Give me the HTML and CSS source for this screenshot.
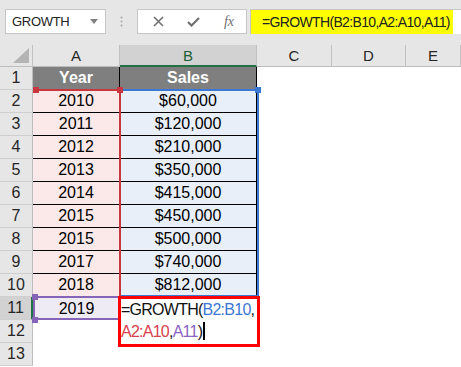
FILE: index.html
```html
<!DOCTYPE html>
<html lang="en">
<head>
  <meta charset="UTF-8">
  <title>GROWTH formula</title>
  <link rel="stylesheet" href="styles.css">
</head>
<body>
  <div class="toolbar">
    <div class="namebox">
      <span>GROWTH</span>
      <svg class="caret" width="8" height="5" viewBox="0 0 8 5"><path d="M0 0h8L4 5z" fill="#808080"/></svg>
    </div>
    <div class="sep">
      <svg width="3" height="11" viewBox="0 0 3 11"><circle cx="1.5" cy="1.5" r="1" fill="#a8a8a8"/><circle cx="1.5" cy="5.5" r="1" fill="#a8a8a8"/><circle cx="1.5" cy="9.5" r="1" fill="#a8a8a8"/></svg>
    </div>
    <div class="fxbox">
      <svg width="11" height="11" viewBox="0 0 11 11"><path d="M1 1l9 9M10 1l-9 9" stroke="#707070" stroke-width="1.6"/></svg>
      <svg width="13" height="10" viewBox="0 0 13 10"><path d="M1 5l3.5 3.5L12 1" stroke="#707070" stroke-width="2.2" fill="none"/></svg>
      <span class="fx">fx</span>
    </div>
    <div class="formula">
      <span class="hl">=GROWTH(B2:B10,A2:A10,A11)</span>
    </div>
  </div>

  <div class="sheet">
    <div class="hd corner"><svg width="16" height="15" viewBox="0 0 16 15"><path d="M16 0v15H0z" fill="#b4b4b4"/></svg></div>
    <div class="hd">A</div>
    <div class="hd sel">B</div>
    <div class="hd">C</div>
    <div class="hd">D</div>
    <div class="hd">E</div>

    <div class="rn">1</div><div class="c t top">Year</div><div class="c t top">Sales</div><div class="c"></div><div class="c"></div><div class="c"></div>
    <div class="rn">2</div><div class="c t a">2010</div><div class="c t b">$60,000</div><div class="c"></div><div class="c"></div><div class="c"></div>
    <div class="rn">3</div><div class="c t a">2011</div><div class="c t b">$120,000</div><div class="c"></div><div class="c"></div><div class="c"></div>
    <div class="rn">4</div><div class="c t a">2012</div><div class="c t b">$210,000</div><div class="c"></div><div class="c"></div><div class="c"></div>
    <div class="rn">5</div><div class="c t a">2013</div><div class="c t b">$350,000</div><div class="c"></div><div class="c"></div><div class="c"></div>
    <div class="rn">6</div><div class="c t a">2014</div><div class="c t b">$415,000</div><div class="c"></div><div class="c"></div><div class="c"></div>
    <div class="rn">7</div><div class="c t a">2015</div><div class="c t b">$450,000</div><div class="c"></div><div class="c"></div><div class="c"></div>
    <div class="rn">8</div><div class="c t a">2015</div><div class="c t b">$500,000</div><div class="c"></div><div class="c"></div><div class="c"></div>
    <div class="rn">9</div><div class="c t a">2017</div><div class="c t b">$740,000</div><div class="c"></div><div class="c"></div><div class="c"></div>
    <div class="rn">10</div><div class="c t a">2018</div><div class="c t b">$812,000</div><div class="c"></div><div class="c"></div><div class="c"></div>
    <div class="rn sel">11</div><div class="c p">2019</div><div class="c"></div><div class="c"></div><div class="c"></div><div class="c"></div>
    <div class="rn">12</div><div class="c"></div><div class="c"></div><div class="c"></div><div class="c"></div><div class="c"></div>
    <div class="rn">13</div><div class="c"></div><div class="c"></div><div class="c"></div><div class="c"></div><div class="c"></div>

    <!-- range highlights drawn over the grid -->
    <div class="range blue-range"></div>
    <div class="range red-range"></div>
    <div class="range purple-range"></div>
    <span class="handle red h1"></span>
    <span class="handle red h2"></span>
    <span class="handle blue h3"></span>
    <span class="handle purple h4"></span>
    <span class="handle purple h5"></span>

    <div class="edit">
      =GROWTH(<span class="rb">B2:B10</span>,<br><span class="rr">A2:A10</span>,<span class="rp">A11</span>)<span class="cursor"></span>
    </div>
  </div>
</body>
</html>
```

FILE: styles.css
```css
* {
  margin: 0;
  padding: 0;
  box-sizing: border-box;
}

body {
  font-family: 'Liberation Sans', Arial, sans-serif;
  background: #fff;
  color: #000;
  width: 461px;
  overflow: hidden;
}

/* formula bar */
.toolbar {
  height: 45px;
  background: #e6e6e6;
  display: flex;
  align-items: flex-start;
  padding: 9px 0 0 5px;
}

.namebox {
  width: 101px;
  height: 25px;
  background: #fff;
  border: 1px solid #c6c6c6;
  display: flex;
  align-items: center;
  justify-content: space-between;
  padding: 0 7px 0 6px;
  font-size: 13px;
  letter-spacing: -0.3px;
  color: #222;
}

.sep {
  width: 31px;
  height: 25px;
  display: flex;
  align-items: center;
  justify-content: center;
}

.fxbox {
  width: 110px;
  height: 25px;
  background: #fff;
  border: 1px solid #c6c6c6;
  display: flex;
  align-items: center;
  justify-content: space-between;
  padding: 0 12px 0 15px;
}

.fx {
  font-family: 'Liberation Serif', serif;
  font-style: italic;
  font-size: 14px;
  color: #707070;
}

.formula {
  flex: 1;
  height: 25px;
  margin-left: 3px;
  background: #fff;
  border-top: 1px solid #c6c6c6;
  border-left: 1px solid #c6c6c6;
  display: flex;
}

.hl {
  width: 202px;
  height: 24px;
  background: #ffff00;
  font-size: 14px;
  letter-spacing: -0.65px;
  line-height: 24px;
  padding-left: 11px;
  color: #222;
}

/* grid */
.sheet {
  position: relative;
  display: grid;
  grid-template-columns: 33px 87px 137px 75px 74px 1fr;
  grid-template-rows: 22px repeat(13, 23px);
  font-size: 16px;
}

.hd {
  background: #e6e6e6;
  border-right: 1px solid #c0c0c0;
  border-bottom: 1px solid #bdbdbd;
  display: flex;
  align-items: center;
  justify-content: center;
  font-size: 15px;
  color: #262626;
}

.hd.corner {
  justify-content: flex-end;
  align-items: flex-end;
  padding: 0 3px 3px 0;
}

.hd.sel {
  background: #d2d2d2;
  border-bottom: 2px solid #217346;
  color: #1d5e38;
}

.rn {
  background: #e6e6e6;
  border-right: 1px solid #bdbdbd;
  border-bottom: 1px solid #cfcfcf;
  display: flex;
  align-items: center;
  justify-content: center;
  color: #262626;
}

.rn.sel {
  background: #d2d2d2;
  border-right: 2px solid #217346;
}

.c {
  display: flex;
  align-items: center;
  justify-content: center;
}

.c.t {
  border-right: 1px solid #000;
  border-bottom: 1px solid #000;
}

.c.top {
  background: #7f7f7f;
  color: #fff;
  font-weight: bold;
}

.c.a { background: #fbe9e9; }
.c.b { background: #e8eff9; }
.c.p { background: #efebf5; }

.range {
  position: absolute;
  border: 2px solid;
}

.blue-range {
  left: 119px;
  top: 44px;
  width: 140px;
  height: 208px;
  border-color: #3b78d4;
}

.red-range {
  left: 33px;
  top: 44px;
  width: 88px;
  height: 208px;
  border-color: #c8363f;
  border-left-width: 0;
  border-bottom-width: 0;
}

.purple-range {
  left: 33px;
  top: 251px;
  width: 88px;
  height: 24px;
  border-color: #8664b8;
}

.handle {
  position: absolute;
  width: 6px;
  height: 6px;
}

.handle.red { background: #c8363f; }
.handle.blue { background: #3b78d4; }
.handle.purple { background: #8664b8; }

.h1 { left: 33px; top: 42px; }
.h2 { left: 117px; top: 42px; }
.h3 { left: 255px; top: 42px; }
.h4 { left: 32px; top: 249px; }
.h5 { left: 32px; top: 272px; }

.edit {
  position: absolute;
  left: 118px;
  top: 251px;
  width: 142px;
  height: 51px;
  background: #fff;
  border: 3px solid #ff0000;
  padding-left: 0;
  font-size: 16px;
  line-height: 22px;
  letter-spacing: -0.75px;
  color: #111;
}

.rb { color: #3b78d4; }
.rr { color: #d8414b; }
.rp { color: #8a64c4; }

.cursor {
  display: inline-block;
  width: 1.5px;
  height: 18px;
  background: #000;
  vertical-align: -3px;
  margin-left: 1px;
}
```
